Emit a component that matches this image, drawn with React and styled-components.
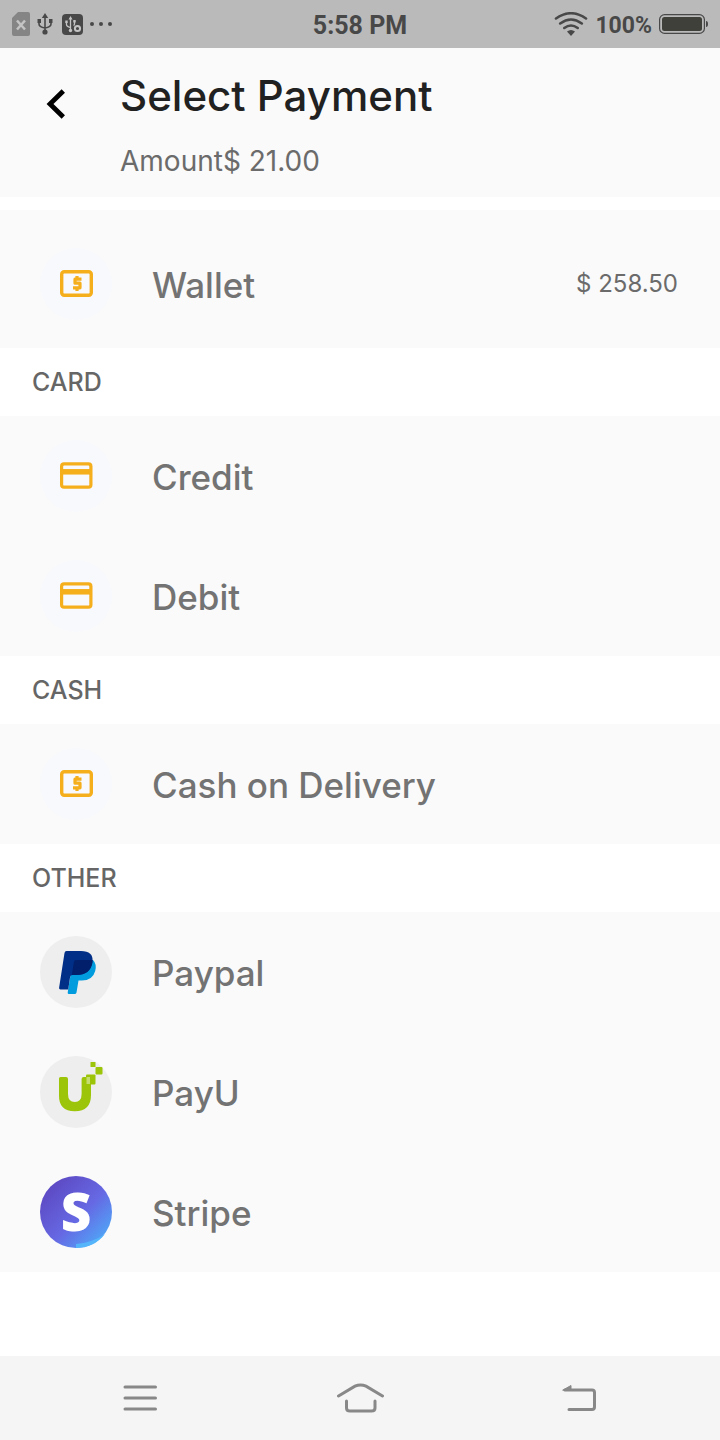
import styled, { createGlobalStyle } from "styled-components";

const GlobalStyle = createGlobalStyle`
    * {
        box-sizing: border-box;
    }

    body {
        margin: 0;
        background: #fff;
        font-family: Inter, "Open Sans", sans-serif;
    }

    button {
        border: none;
        background: none;
        padding: 0;
        font: inherit;
        color: inherit;
        cursor: pointer;
    }

    svg {
        display: block;
        flex-shrink: 0;
    }
`

const Screen = styled.div`
    min-height: 100vh;
    display: flex;
    flex-direction: column;
`

const StatusBar = styled.div`
    height: 48px;
    padding: 0 12px;
    display: grid;
    grid-template-columns: 1fr auto 1fr;
    align-items: center;
    background: #bababa;
    color: #484848;
    font-family: Roboto, sans-serif;
    font-weight: 700;
`

const StatusGroup = styled.div`
    display: flex;
    align-items: center;
    justify-content: ${props => props.$end ? 'flex-end' : 'flex-start'};
    gap: 7px;
`

const StatusText = styled.span`
    font-size: ${props => props.$large ? '25px' : '23px'};
    line-height: 28px;
    padding-top: 3px;
`

const Header = styled.header`
    display: flex;
    align-items: flex-start;
    gap: 40px;
    padding: 16px 32px 18px;
    background: #fafafa;
`

const BackButton = styled.button`
    width: 48px;
    height: 80px;
    display: flex;
    align-items: center;
    justify-content: center;
`

const Title = styled.h1`
    margin: 0;
    font-size: 42px;
    line-height: 64px;
    font-weight: 500;
    color: #212121;
`

const Amount = styled.p`
    margin: 0;
    padding-top: 15px;
    font-size: 28px;
    line-height: 36px;
    font-weight: 400;
    color: #6b6b6b;
`

const Main = styled.main`
    padding-top: 13px;
`

const Group = styled.div`
    background: #fafafa;
    padding: ${props => props.$spaced ? '14px 0 4px' : '0'};
`

const SectionTitle = styled.h2`
    margin: 0;
    padding: 0 32px;
    font-size: 25px;
    line-height: 68px;
    font-weight: 500;
    color: #666;
`

const Row = styled.button`
    width: 100%;
    height: 120px;
    padding: 0 42px 0 40px;
    display: flex;
    align-items: center;
    gap: 40px;
    text-align: left;
`

const Badge = styled.span`
    width: 72px;
    height: 72px;
    flex-shrink: 0;
    display: flex;
    align-items: center;
    justify-content: center;
    border-radius: 50%;
    background: ${props => props.$background ? props.$background : '#f8f9fd'};
    color: #f5ae1c;
`

const Name = styled.span`
    flex: 1;
    padding-top: 2px;
    font-size: 35px;
    line-height: 48px;
    font-weight: 500;
    color: #737373;
`

const Balance = styled.span`
    font-size: 24px;
    line-height: 36px;
    color: #6b6b6b;
`

const NavBar = styled.nav`
    height: 84px;
    margin-top: auto;
    padding: 0 30px;
    display: grid;
    grid-template-columns: repeat(3, 1fr);
    background: #f5f5f5;
`

const NavButton = styled.button`
    display: flex;
    align-items: center;
    justify-content: center;
`

const SimIcon = () => (
    <svg width="18" height="24" viewBox="0 0 18 24" aria-hidden="true">
        <path d="M6 0h10q2 0 2 2v20q0 2-2 2H2q-2 0-2-2V6z" fill="#858585" />
        <path d="M5 8.500l8 9M13 8.500l-8 9" stroke="#c4c4c4" strokeWidth="2.500" />
    </svg>
)

const UsbIcon = () => (
    <svg width="16" height="22" viewBox="0 0 16 22" fill="none" stroke="#484848" strokeWidth="1.600" aria-hidden="true">
        <path d="M8 3v16M2 8v3q0 3 6 4M14 8v3q0 3-6 4" />
        <path d="M8 0l3.200 5H4.800z" fill="#484848" stroke="none" />
        <circle cx="8" cy="19" r="2.600" fill="#484848" stroke="none" />
        <path d="M.5 6h3.500v4H.5zM12 6h3.500v4H12z" fill="#484848" stroke="none" />
    </svg>
)

const UsbSettingsIcon = () => (
    <svg width="23" height="21" viewBox="-2 0 23 21" fill="none" stroke="#c4c4c4" strokeWidth="1.300" aria-hidden="true">
        <rect width="21" height="21" rx="4" fill="#484848" stroke="none" />
        <path d="M8.500 4v12M4.500 8v2.500q0 2 4 3M12.500 7v3q0 1-1 1.500" />
        <path d="M8.500 2l2 3.500h-4zM3.300 6.500h2.400V9H3.300zM11.300 6h2.400v2.500h-2.400z" fill="#c4c4c4" stroke="none" />
        <circle cx="8.500" cy="16.500" r="1.700" fill="#c4c4c4" stroke="none" />
        <circle cx="15.500" cy="14.500" r="2.600" strokeWidth="2" />
    </svg>
)

const DotsIcon = () => (
    <svg width="22" height="4" viewBox="0 0 22 4" fill="#484848" aria-hidden="true">
        <circle cx="2" cy="2" r="2" />
        <circle cx="11" cy="2" r="2" />
        <circle cx="20" cy="2" r="2" />
    </svg>
)

const WifiIcon = () => (
    <svg width="34" height="24" viewBox="0 0 34 24" fill="none" stroke="#484848" strokeWidth="2.600" strokeLinecap="round" aria-hidden="true">
        <path d="M2 6.500q15-10.500 30 0M6.200 11.500q10.800-8 21.600 0M10.300 16q6.700-5 13.400 0" />
        <path d="M17 24l-4-4.500q4-3 8 0z" fill="#484848" stroke="none" />
    </svg>
)

const BatteryIcon = () => (
    <svg width="49" height="20" viewBox="0 0 49 20" aria-hidden="true">
        <rect x=".6" y=".6" width="44.800" height="18.800" rx="5" fill="none" stroke="#484848" strokeWidth="1.200" />
        <rect x="3" y="3" width="40" height="14" rx="2.500" fill="#3e4039" />
        <path d="M47 7q2 0 2 3t-2 3z" fill="#484848" />
    </svg>
)

const BackIcon = () => (
    <svg width="20" height="30" viewBox="0 0 20 30" fill="none" stroke="#000" strokeWidth="4.800" aria-hidden="true">
        <path d="M17.300 2L4 15l13.300 13" />
    </svg>
)

const CashIcon = () => (
    <svg width="34" height="28" viewBox="0 0 34 28" fill="none" stroke="currentColor" aria-hidden="true">
        <rect x="2.700" y="1.700" width="29.600" height="23.600" rx="2.500" strokeWidth="3.400" />
        <path d="M22.500 9.200h-6.500v4h5v4.600h-7" strokeWidth="3.200" strokeLinejoin="round" />
        <path d="M18 6v3M18 18v3" strokeWidth="3.200" />
    </svg>
)

const CardIcon = () => (
    <svg width="34" height="28" viewBox="0 0 34 28" fill="none" stroke="currentColor" strokeWidth="3.200" aria-hidden="true">
        <rect x="2.600" y="1.900" width="29.300" height="23.300" rx="2.500" />
        <path d="M2 9.800h30" strokeWidth="5.500" />
    </svg>
)

const PaypalLogo = () => (
    <svg width="72" height="72" viewBox="0 0 72 72" aria-hidden="true">
        <path d="M33 24h20q4 4 2.200 11-2.500 9.500-13.500 9.500h-3.200l-2 12q-.3 1.500-2 1.500h-5.500q-1.500 0-1.300-1.500z" fill="#009cde" />
        <path d="M26.500 15H41q12.500 0 11.500 10.500Q50.500 39 36 39h-3.500q-2 0-2.400 2l-1.900 12.500H20.500q-1.700 0-1.400-1.700L24.500 17q.3-2 2-2z" fill="#012f87" />
        <path d="M34 25.500q.4-1.500 2-1.500h16.500v2.500Q50.500 39 36 39h-3.500l-.7.100z" fill="#011f6b" />
    </svg>
)

const PayuLogo = () => (
    <svg width="72" height="72" viewBox="0 0 72 72" fill="#9cc408" aria-hidden="true">
        <path d="M20.500 21H26q2 0 2 2v15q0 8 6.800 8t6.800-8V23q0-2 2-2H51v18q0 16.200-16.200 16.200T19 39V22.500q0-1.500 1.500-1.500z" />
        <rect x="46" y="18.500" width="9.500" height="10" rx="1" />
        <rect x="46.500" y="21" width="3.500" height="7" fill="#c5dc70" />
        <rect x="55.500" y="11" width="7" height="7.500" rx="1" />
        <rect x="50.500" y="6" width="5" height="5" rx=".5" />
    </svg>
)

const StripeLogo = () => (
    <svg width="72" height="72" viewBox="0 0 72 72" overflow="visible" aria-hidden="true">
        <defs>
            <linearGradient id="stripe" x1="0" y1="0" x2="1" y2="1">
                <stop offset="0.150" stopColor="#5d4bc4" />
                <stop offset="0.550" stopColor="#6668e3" />
                <stop offset="0.850" stopColor="#529ff5" />
            </linearGradient>
        </defs>
        <circle cx="36" cy="36" r="36" fill="url(#stripe)" />
        <path d="M36 68q16-1 29-10-11 14-29 14z" fill="#55b5fb" />
        <text x="36" y="55" fill="#fff" fontFamily="Noto Sans, sans-serif" fontWeight="900" fontSize="53" textAnchor="middle">S</text>
    </svg>
)

const MenuIcon = () => (
    <svg width="34" height="26" viewBox="0 0 34 26" stroke="#888" strokeWidth="3" strokeLinecap="round" aria-hidden="true">
        <path d="M2 2h30.500M2 13h30.500M2 24h30.500" />
    </svg>
)

const HomeIcon = () => (
    <svg width="48" height="30" viewBox="0 0 48 30" fill="none" stroke="#888" strokeWidth="3" strokeLinecap="round" aria-hidden="true">
        <path d="M2.500 13L19 3.200q5.500-2.600 11 0L46.500 13" />
        <path d="M10.500 18v7q0 3 3.500 3h21.500q3.500 0 3.500-3v-7" />
    </svg>
)

const ReturnIcon = () => (
    <svg width="36" height="28" viewBox="0 0 36 28" fill="none" stroke="#888" strokeWidth="3" strokeLinecap="round" aria-hidden="true">
        <path d="M3 6h27q2.500 0 2.500 2.500v14.500q0 2.500-2.500 2.500H7" />
        <path d="M1 6L9 1.500V6z" fill="#888" strokeWidth="1" strokeLinejoin="round" />
    </svg>
)

const sections = [
    {
        title: "CARD",
        items: [
            { name: "Credit", icon: <CardIcon /> },
            { name: "Debit", icon: <CardIcon /> },
        ],
    },
    {
        title: "CASH",
        items: [{ name: "Cash on Delivery", icon: <CashIcon /> }],
    },
    {
        title: "OTHER",
        items: [
            { name: "Paypal", icon: <PaypalLogo />, background: "#eee" },
            { name: "PayU", icon: <PayuLogo />, background: "#eee" },
            { name: "Stripe", icon: <StripeLogo /> },
        ],
    },
]

const PaymentRow = ({ name, icon, background, balance }) => {
    return <Row type="button">
        <Badge $background={background}>{icon}</Badge>
        <Name>{name}</Name>
        {balance && <Balance>{balance}</Balance>}
    </Row>
}

const App = () => {
    return <Screen>
        <GlobalStyle />
        <StatusBar>
            <StatusGroup>
                <SimIcon />
                <UsbIcon />
                <UsbSettingsIcon />
                <DotsIcon />
            </StatusGroup>
            <StatusText $large>5:58 PM</StatusText>
            <StatusGroup $end>
                <WifiIcon />
                <StatusText>100%</StatusText>
                <BatteryIcon />
            </StatusGroup>
        </StatusBar>
        <Header>
            <BackButton type="button" aria-label="Back"><BackIcon /></BackButton>
            <div>
                <Title>Select Payment</Title>
                <Amount>Amount$ 21.00</Amount>
            </div>
        </Header>
        <Main>
            <Group $spaced>
                <PaymentRow name="Wallet" icon={<CashIcon />} balance="$ 258.50" />
            </Group>
            {sections.map(section => (
                <section key={section.title}>
                    <SectionTitle>{section.title}</SectionTitle>
                    <Group>
                        {section.items.map(item => <PaymentRow key={item.name} {...item} />)}
                    </Group>
                </section>
            ))}
        </Main>
        <NavBar>
            <NavButton type="button" aria-label="Recent apps"><MenuIcon /></NavButton>
            <NavButton type="button" aria-label="Home"><HomeIcon /></NavButton>
            <NavButton type="button" aria-label="Go back"><ReturnIcon /></NavButton>
        </NavBar>
    </Screen>
}

export default App
